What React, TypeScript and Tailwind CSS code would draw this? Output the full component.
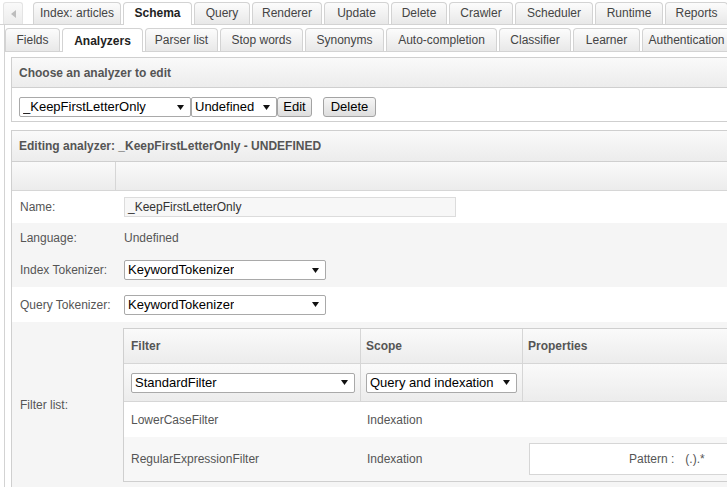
import React from "react";

const topTabs = [
  { label: "Index: articles", w: "w-[88px]" },
  { label: "Schema", w: "w-[69px]", active: true },
  { label: "Query", w: "w-[56px]" },
  { label: "Renderer", w: "w-[70px]" },
  { label: "Update", w: "w-[65px]" },
  { label: "Delete", w: "w-[56px]" },
  { label: "Crawler", w: "w-[64px]" },
  { label: "Scheduler", w: "w-[78px]" },
  { label: "Runtime", w: "w-[68px]" },
  { label: "Reports", w: "w-[63px]" },
  { label: "", w: "w-[20px]" },
];

const subTabs = [
  { label: "Fields", w: "w-[55px]" },
  { label: "Analyzers", w: "w-[81px]", active: true },
  { label: "Parser list", w: "w-[73px]" },
  { label: "Stop words", w: "w-[83px]" },
  { label: "Synonyms", w: "w-[79px]" },
  { label: "Auto-completion", w: "w-[111px]" },
  { label: "Classifier", w: "w-[72px]" },
  { label: "Learner", w: "w-[67px]" },
  { label: "Authentication", w: "w-[89px]" },
];

const Arrow = () => (
  <svg width="7" height="5" viewBox="0 0 7 5" className="shrink-0">
    <path d="M0 0 H7 L3.5 5 Z" fill="#111" />
  </svg>
);

// fake native select, rendered the same everywhere
const Select = ({ text, className }: { text: string; className: string }) => (
  <div
    className={
      "flex h-[20px] shrink-0 items-center justify-between rounded-[2px] border border-[#a9a9a9] bg-white pl-[3px] pr-[6px] text-[13px] text-black " +
      className
    }
  >
    <span className="overflow-hidden whitespace-nowrap">{text}</span>
    <Arrow />
  </div>
);

const Button = ({ text, className }: { text: string; className: string }) => (
  <div
    className={
      "flex h-[20px] shrink-0 items-center justify-center rounded-[3px] border border-[#a3a3a3] bg-gradient-to-b from-[#f6f6f6] to-[#dedede] text-[13px] text-black " +
      className
    }
  >
    {text}
  </div>
);

const Tab = ({ label, w, active, h }: { label: string; w: string; active?: boolean; h: string }) => (
  <div
    className={
      `relative flex shrink-0 items-center justify-center rounded-t-[4px] border border-b-0 border-[#d3d3d3] ${w} ` +
      (h === "top" ? "pb-[2px] " : "") +
      (active
        ? `z-10 mb-[-1px] bg-white font-bold text-[#222] ${h === "top" ? "h-[23px]" : "h-[24px]"}`
        : `bg-gradient-to-b from-[#fcfcfc] to-[#e8e8e8] text-[#444] ${h === "top" ? "h-[22px]" : "h-[23px]"}`)
    }
  >
    {label}
  </div>
);

export default function App() {
  return (
    <div className="h-[487px] w-[727px] overflow-hidden bg-white font-['Liberation_Sans',Arial,sans-serif] text-[12px] text-[#555]">
      {/* top tabs */}
      <div className="flex h-[25px] items-end gap-[2px] border-b border-[#d3d3d3] pl-[3px]">
        <div className="mr-[8px] flex h-[22px] w-[20px] shrink-0 items-center justify-center rounded-t-[3px] border border-b-0 border-[#e4e4e4] bg-gradient-to-b from-[#fafafa] to-[#ececec]">
          <svg width="5" height="8" viewBox="0 0 5 8">
            <path d="M5 0 V8 L0 4 Z" fill="#bdbdbd" />
          </svg>
        </div>
        {topTabs.map((t, i) => (
          <Tab key={i} label={t.label} w={t.w} active={t.active} h="top" />
        ))}
      </div>

      <div className="ml-[4px] border-l border-[#d3d3d3]">
        {/* sub tabs */}
        <div className="flex h-[27px] items-end gap-[2px] border-b border-[#d3d3d3]">
          {subTabs.map((t, i) => (
            <Tab key={i} label={t.label} w={t.w} active={t.active} h="sub" />
          ))}
        </div>

        <div className="pl-[6px] pt-[5px]">
          {/* choose panel */}
          <div className="w-[740px] border border-[#cfcfcf]">
            <div className="flex h-[30px] items-center border-b border-[#cfcfcf] bg-gradient-to-b from-[#fafafa] to-[#ececec] pl-[7px] font-bold text-[#555]">
              Choose an analyzer to edit
            </div>
            <div className="flex h-[33px] items-start pl-[7px] pt-[9px]">
              <Select text="_KeepFirstLetterOnly" className="w-[172px]" />
              <Select text="Undefined" className="w-[86px]" />
              <Button text="Edit" className="w-[35px]" />
              <Button text="Delete" className="ml-[11px] w-[53px]" />
            </div>
          </div>

          {/* editing panel */}
          <div className="mt-[8px] w-[740px] border border-[#cfcfcf]">
            <div className="flex h-[31px] items-center border-b border-[#cfcfcf] bg-gradient-to-b from-[#fafafa] to-[#ececec] pl-[7px] font-bold text-[#555]">
              Editing analyzer: _KeepFirstLetterOnly - UNDEFINED
            </div>
            <div className="flex h-[29px] border-b border-[#d6d6d6] bg-gradient-to-b from-[#fafafa] to-[#ececec]">
              <div className="w-[104px] border-r border-[#d6d6d6]" />
              <div className="flex-1" />
            </div>

            <div className="flex h-[32px] items-center bg-white">
              <div className="w-[105px] pl-[8px]">Name:</div>
              <div className="ml-[7px] flex h-[20px] w-[332px] items-center border border-[#dcdcdc] bg-[#f7f7f7] pl-[3px] text-[12px] text-[#333]">
                _KeepFirstLetterOnly
              </div>
            </div>
            <div className="flex h-[30px] items-center bg-[#f5f5f5]">
              <div className="w-[105px] pl-[8px]">Language:</div>
              <div className="ml-[7px]">Undefined</div>
            </div>
            <div className="flex h-[34px] items-center bg-[#f5f5f5]">
              <div className="w-[105px] pl-[8px]">Index Tokenizer:</div>
              <Select text="KeywordTokenizer" className="ml-[7px] w-[202px]" />
            </div>
            <div className="flex h-[35px] items-center bg-white">
              <div className="w-[105px] pl-[8px]">Query Tokenizer:</div>
              <Select text="KeywordTokenizer" className="ml-[7px] w-[202px]" />
            </div>

            <div className="flex h-[170px] bg-[#f5f5f5]">
              <div className="flex w-[105px] shrink-0 items-center pb-[4px] pl-[8px]">Filter list:</div>
              <div className="pl-[6px] pt-[6px]">
                <div className="w-[620px] border border-[#cfcfcf]">
                  <div className="flex h-[35px] border-b border-[#d6d6d6] bg-gradient-to-b from-[#fafafa] to-[#ececec] font-bold text-[#555]">
                    <div className="flex w-[237px] shrink-0 items-center border-r border-[#d6d6d6] pl-[7px]">Filter</div>
                    <div className="flex w-[162px] shrink-0 items-center border-r border-[#d6d6d6] pl-[5px]">Scope</div>
                    <div className="flex flex-1 items-center pl-[5px]">Properties</div>
                  </div>
                  <div className="flex h-[38px] border-b border-[#d6d6d6] bg-gradient-to-b from-[#fafafa] to-[#ececec]">
                    <div className="flex w-[237px] shrink-0 items-center border-r border-[#d6d6d6] pl-[7px]">
                      <Select text="StandardFilter" className="w-[224px]" />
                    </div>
                    <div className="flex w-[162px] shrink-0 items-center border-r border-[#d6d6d6] pl-[5px]">
                      <Select text="Query and indexation" className="w-[151px]" />
                    </div>
                    <div className="flex-1" />
                  </div>
                  <div className="flex h-[35px] items-center bg-white">
                    <div className="w-[238px] shrink-0 pl-[7px]">LowerCaseFilter</div>
                    <div className="pl-[5px]">Indexation</div>
                  </div>
                  <div className="flex h-[44px] items-center bg-[#f7f7f7]">
                    <div className="w-[238px] shrink-0 pl-[7px]">RegularExpressionFilter</div>
                    <div className="w-[162px] shrink-0 pl-[5px]">Indexation</div>
                    <div className="ml-[5px] flex h-[32px] w-[220px] shrink-0 items-center border border-[#d6d6d6] bg-white pl-[99px]">
                      <span>Pattern :</span>
                      <span className="ml-[11px]">(.).*</span>
                    </div>
                  </div>
                </div>
              </div>
            </div>
          </div>
        </div>
      </div>
    </div>
  );
}
